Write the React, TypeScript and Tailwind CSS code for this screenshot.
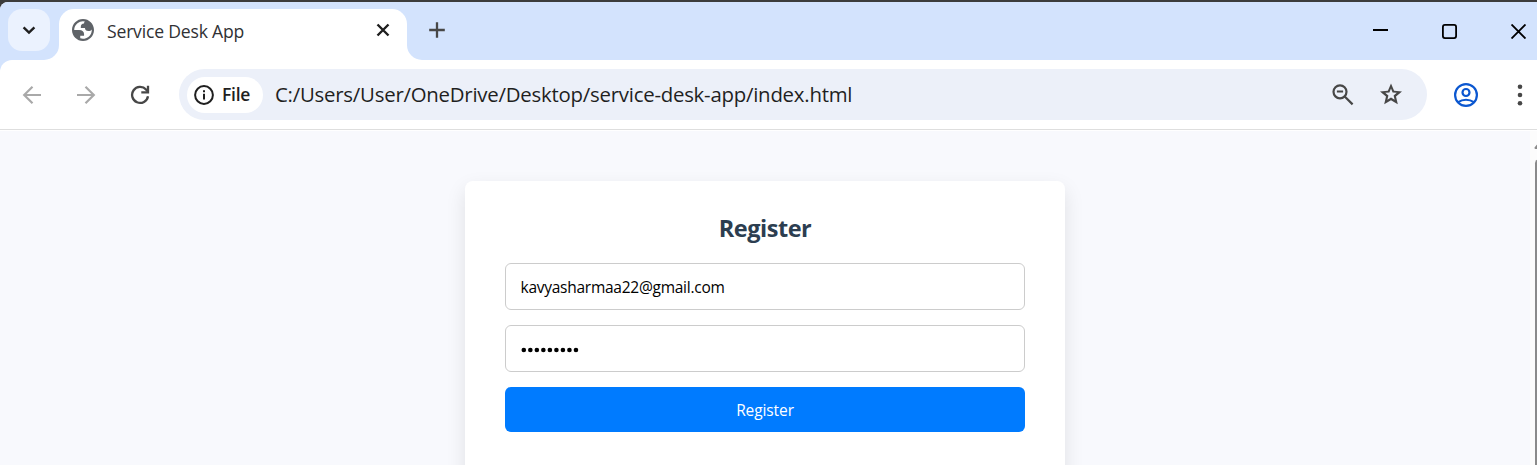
import React from "react";
import type { ReactNode } from "react";

type IconProps = { size: number; box?: string; className?: string; children: ReactNode };

function Icon({ size, box = "0 0 24 24", className, children }: IconProps) {
  return (
    <svg width={size} height={size} viewBox={box} fill="none" className={"block shrink-0 " + (className ?? "")}>
      {children}
    </svg>
  );
}

function TabStrip() {
  return (
    <div className="flex h-[58px] shrink-0 rounded-tl-lg bg-white">
      <div className="h-full w-[59px] shrink-0 rounded-tl-lg rounded-br-[15px] bg-[#d3e3fd] pt-[7px] pl-2">
        <button className="flex size-[42px] items-center justify-center rounded-[14px] bg-[#ebf2fe]">
          <Icon size={14} box="0 0 14 14" className="text-[#1f1f1f]">
            <path d="M1.6 4.3 7 9.6l5.4-5.3" stroke="currentColor" strokeWidth="2.4" />
          </Icon>
        </button>
      </div>
      <div className="w-[348px] shrink-0 bg-[#d3e3fd] pt-[7px]">
        <div className="flex h-[51px] items-center rounded-t-[15px] bg-white pr-[17px] pb-[9px] pl-[13px]">
          <Icon size={22} box="2 2 20 20" className="text-[#5f6368]">
            <path
              fill="currentColor"
              fillRule="evenodd"
              d="M12 2C6.480 2 2 6.480 2 12s4.480 10 10 10 10-4.480 10-10S17.520 2 12 2zM4 12h4.400c3.407.022 4.922 1.730 4.543 5.127H9.488v2.470a8.004 8.004 0 0 0 10.498-8.083C19.327 12.504 18.332 13 17 13c-2.137 0-3.206-.916-3.206-2.750h-3.748c-.274-2.728.683-4.092 2.870-4.092 0-.975.327-1.597.811-1.970A8.004 8.004 0 0 0 4 12z"
            />
          </Icon>
          <span className="ml-[13px] flex-1 pt-0.5 text-[17.600px] leading-6 tracking-[-0.200px] whitespace-nowrap text-[#303134]">
            Service Desk App
          </span>
          <Icon size={14} box="0 0 14 14" className="text-[#1f1f1f]">
            <path d="m1.500 1.500 11 11m0-11-11 11" stroke="currentColor" strokeWidth="2.400" />
          </Icon>
        </div>
      </div>
      <div className="flex flex-1 items-start rounded-bl-[15px] bg-[#d3e3fd] pt-5 pl-[22px]">
        <Icon size={16} box="0 0 16 16" className="text-[#474747]">
          <path d="M8 .2v15.600M.2 8h15.600" stroke="currentColor" strokeWidth="2.300" />
        </Icon>
        <div className="ml-auto flex items-start gap-[54px] pr-[11px] text-black">
          <Icon size={15} box="0 0 15 15">
            <path d="M0 8h15" stroke="currentColor" strokeWidth="2" />
          </Icon>
          <Icon size={15} box="0 0 15 15" className="mt-[1.500px]">
            <rect x=".9" y=".9" width="13.200" height="13.200" rx="2" stroke="currentColor" strokeWidth="1.800" />
          </Icon>
          <Icon size={15} box="0 0 15 15" className="mt-[1.500px]">
            <path d="m.5.5 14 14m0-14-14 14" stroke="currentColor" strokeWidth="1.900" />
          </Icon>
        </div>
      </div>
    </div>
  );
}

function Toolbar() {
  return (
    <div className="shrink-0 bg-[#d3e3fd]">
      <div className="flex h-[70px] items-center rounded-tl-[12px] border-b border-[#dedede] bg-white">
        <Icon size={20} box="0 0 20 20" className="ml-[22px] text-[#a9a9a9]">
          <path d="M19 10H2.500M10.500 1.700 2.200 10l8.300 8.300" stroke="currentColor" strokeWidth="2.200" />
        </Icon>
        <Icon size={20} box="0 0 20 20" className="ml-[34px] text-[#a9a9a9]">
          <path d="M1 10h16.500M9.500 1.700l8.300 8.300-8.300 8.300" stroke="currentColor" strokeWidth="2.200" />
        </Icon>
        <Icon size={20} box="0 0 20 20" className="ml-[34px] text-[#474747]">
          <path d="M18 11.200A8 8 0 1 1 16.100 4.600L18 6.500" stroke="currentColor" strokeWidth="2.300" />
          <path d="M18 .800V7.300H11.300" stroke="currentColor" strokeWidth="2.300" />
        </Icon>
        <div className="ml-[29px] flex h-[51px] w-[1248px] shrink-0 items-center rounded-full bg-[#ecf0f9] pr-6 pl-2">
          <div className="flex h-9 w-[76px] shrink-0 items-center rounded-full bg-white pl-[7px] text-[#1f1f1f]">
            <Icon size={20} box="0 0 20 20">
              <circle cx="10" cy="10" r="8.900" stroke="currentColor" strokeWidth="2" />
              <path d="M10 8.800v5.600M10 5.300v2" stroke="currentColor" strokeWidth="2" />
            </Icon>
            <span className="ml-2 pb-px text-[17.500px] leading-6 font-semibold tracking-[-0.250px]">File</span>
          </div>
          <span className="ml-3 flex-1 pb-0.5 text-[20.400px] leading-7 tracking-[-0.240px] whitespace-nowrap text-[#1f1f1f]">
            C:/Users/User/OneDrive/Desktop/service-desk-app/index.html
          </span>
          <Icon size={22} box="0 0 22 22" className="text-[#474747]">
            <circle cx="8" cy="7.800" r="6.500" stroke="currentColor" strokeWidth="2.200" />
            <path d="m12.700 12.500 7.900 7.900M4.900 7.500h6.200" stroke="currentColor" strokeWidth="2.200" />
          </Icon>
          <Icon size={24} className="ml-[25px] text-[#474747]">
            <path
              d="m12 .4 3.100 7.300 7.900.7-6 5.200 1.800 7.700-6.800-4.100-6.800 4.100L7 13.600 1 8.400l7.900-.7L12 .4Zm0 5.200-1.600 3.900-4.200.3 3.200 2.800-1 4.100 3.600-2.200 3.600 2.200-1-4.100 3.200-2.800-4.200-.3L12 5.600Z"
              fill="currentColor"
            />
          </Icon>
        </div>
        <Icon size={24} className="ml-[27px] text-[#0b57d0]">
          <circle cx="12" cy="12" r="10.900" stroke="currentColor" strokeWidth="2.200" />
          <circle cx="12" cy="9.500" r="3.500" stroke="currentColor" strokeWidth="2.200" />
          <path d="M4.200 19.200c4.500-3.300 11.100-3.300 15.600 0" stroke="currentColor" strokeWidth="2.200" />
        </Icon>
        <Icon size={22} box="0 0 22 22" className="ml-[31px] text-[#474747]">
          <circle cx="11" cy="2.700" r="2.300" fill="currentColor" />
          <circle cx="11" cy="11" r="2.300" fill="currentColor" />
          <circle cx="11" cy="19.300" r="2.300" fill="currentColor" />
        </Icon>
      </div>
    </div>
  );
}

function RegisterCard() {
  return (
    <form className="h-[400px] w-[600px] shrink-0 rounded-lg bg-white px-10 pt-[29px] shadow-[0_8px_20px_rgba(0,0,0,0.1)]">
      <h2 className="h-[53px] text-center text-[23.500px] leading-9 font-bold tracking-[-0.450px] text-[#2c3e50]">Register</h2>
      <div className="flex flex-col gap-[15px]">
        <input
          type="text"
          defaultValue="kavyasharmaa22@gmail.com"
          className="h-[47px] w-full rounded-md border border-[#ccc] bg-white px-[14.500px] text-[15.500px] tracking-[-0.260px] text-black outline-none"
        />
        <div className="flex h-[47px] items-center rounded-md border border-[#ccc] pl-[15px]">
          <Icon size={60} box="0 0 60 60" className="text-black">
            {Array.from({ length: 9 }, (_, i) => (
              <circle key={i} cx={2.800 + i * 6.520} cy="31" r="2.300" fill="currentColor" />
            ))}
          </Icon>
        </div>
        <button type="button" className="h-[45px] rounded-md bg-[#007bff] pt-0.5 text-[15.500px] tracking-[-0.100px] text-white">
          Register
        </button>
      </div>
    </form>
  );
}

export default function App() {
  return (
    <div className="flex h-[465px] w-[1537px] flex-col overflow-hidden bg-[#3c3c3c] pt-0.5 font-['Open_Sans','Noto_Sans',sans-serif]">
      <TabStrip />
      <Toolbar />
      <div className="flex min-h-0 flex-1 border-t border-white bg-[#f8f9fd]">
        <main className="flex flex-1 items-start justify-center pt-[50px]">
          <RegisterCard />
        </main>
        <div className="w-[7px] shrink-0 overflow-hidden bg-[#fcfcfc] pt-[10px] pl-1">
          <Icon size={12} box="0 0 12 12" className="text-[#8b8b8b]">
            <path d="M1.500 7 6 1.500 10.500 7Z" fill="currentColor" stroke="currentColor" strokeWidth="2" strokeLinejoin="round" />
          </Icon>
          <div className="mt-[6px] ml-px h-[320px] w-[9px] rounded-full bg-[#8b8b8b]" />
        </div>
      </div>
    </div>
  );
}
